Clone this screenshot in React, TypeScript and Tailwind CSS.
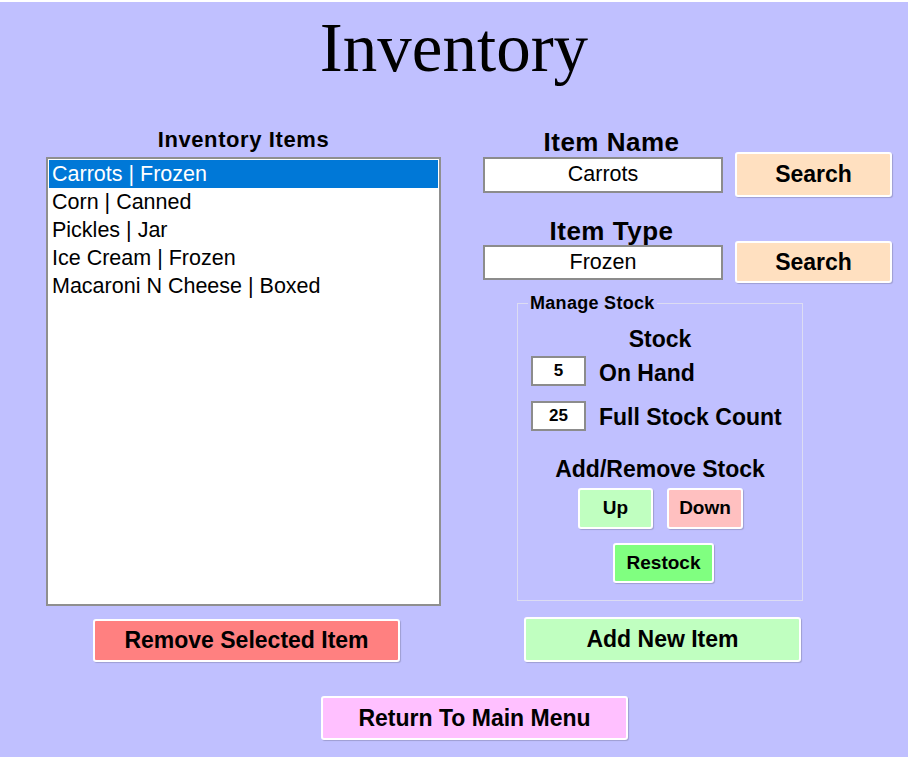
import React from 'react'

const items = [
  'Carrots | Frozen',
  'Corn | Canned',
  'Pickles | Jar',
  'Ice Cream | Frozen',
  'Macaroni N Cheese | Boxed',
]

const sans = "font-['Liberation_Sans',Arial,sans-serif]"
const btn =
  'flex items-center justify-center rounded-[3px] border-2 border-white font-bold text-black shadow-[1px_1px_1px_rgba(0,0,0,0.18)]'

function TextBox({ value, className }: { value: string; className: string }) {
  return (
    <div
      className={`flex items-center justify-center border-2 border-[#8c8c8c] bg-white text-black ${className}`}
    >
      {value}
    </div>
  )
}

export default function App() {
  return (
    <div
      className={`relative h-[757px] w-[908px] overflow-hidden border-t-2 border-white bg-[#c0c0ff] ${sans}`}
    >
      <div className="h-[125px] pt-[12px] text-center">
        <h1 className="font-['Liberation_Serif','Times_New_Roman',serif] text-[69px] leading-none text-black">
          Inventory
        </h1>
      </div>

      <div className="flex items-start">
        {/* left: list */}
        <div className="ml-[46px] flex w-[395px] flex-col">
          <div className="h-[26px] text-center text-[22px] font-bold leading-[26px] tracking-[0.6px] text-black">
            Inventory Items
          </div>
          <div className="mt-[4px] h-[449px] border-2 border-[#8f8f8f] bg-white px-[1px] pt-[1px]">
            {items.map((it, i) => (
              <div
                key={it}
                className={`h-[28px] pl-[3px] text-[21.5px] leading-[28px] ${
                  i === 0 ? 'bg-[#0078d7] text-white' : 'text-black'
                }`}
              >
                {it}
              </div>
            ))}
          </div>
          <button className={`${btn} ml-[47px] mt-[13px] h-[43px] w-[307px] bg-[#ff8080] text-[23px]`}>
            Remove Selected Item
          </button>
        </div>

        {/* right: search + stock */}
        <div className="ml-[42px] flex w-[409px] flex-col">
          <div className="mt-[4px] h-[22px] w-[240px] pl-[17px] text-center text-[26px] font-bold leading-[22px] tracking-[0.5px] text-black">
            Item Name
          </div>
          <div className="mt-[-1px] flex h-[45px] items-center">
            <TextBox value="Carrots" className="h-[36px] w-[240px] text-[21.5px]" />
            <button className={`${btn} ml-[12px] h-[45px] w-[157px] bg-[#ffe0c0] text-[23px]`}>
              Search
            </button>
          </div>

          <div className="mt-[23px] h-[22px] w-[240px] pl-[17px] text-center text-[26px] font-bold leading-[22px] tracking-[0.5px] text-black">
            Item Type
          </div>
          <div className="mt-[-1px] flex h-[42px] items-center">
            <TextBox value="Frozen" className="h-[35px] w-[240px] text-[21.5px]" />
            <button className={`${btn} ml-[12px] h-[42px] w-[157px] bg-[#ffe0c0] text-[23px]`}>
              Search
            </button>
          </div>

          {/* Manage Stock group */}
          <div className="relative ml-[34px] mt-[20px] flex h-[298px] w-[286px] flex-col border border-[#dcdcf2]">
            <span className="absolute left-[10px] top-[-10px] bg-[#c0c0ff] px-[2px] text-[18px] font-bold leading-[18px] tracking-[0.3px] text-black">
              Manage Stock
            </span>
            <div className="mt-[22px] h-[26px] text-center text-[23px] font-bold leading-[26px] text-black">
              Stock
            </div>
            <div className="mt-[4px] flex h-[30px] items-center">
              <TextBox value="5" className="ml-[13px] h-[30px] w-[55px] text-[17px] font-bold" />
              <span className="ml-[13px] mt-[4px] text-[23px] font-bold text-black">On Hand</span>
            </div>
            <div className="mt-[15px] flex h-[30px] items-center">
              <TextBox value="25" className="ml-[13px] h-[30px] w-[55px] text-[17px] font-bold" />
              <span className="ml-[13px] mt-[3px] text-[23px] font-bold text-black">Full Stock Count</span>
            </div>
            <div className="mt-[25px] h-[26px] text-center text-[23px] font-bold leading-[26px] text-black">
              Add/Remove Stock
            </div>
            <div className="mt-[6px] flex justify-center gap-[14px] pl-[1px]">
              <button className={`${btn} h-[41px] w-[75px] bg-[#c0ffc0] text-[19px]`}>Up</button>
              <button className={`${btn} h-[41px] w-[76px] bg-[#ffc0c0] text-[19px]`}>Down</button>
            </div>
            <div className="mt-[14px] flex justify-center pl-[7px]">
              <button className={`${btn} h-[40px] w-[101px] bg-[#80ff80] text-[19px]`}>Restock</button>
            </div>
          </div>

          <button className={`${btn} ml-[41px] mt-[16px] h-[45px] w-[277px] bg-[#c0ffc0] text-[23px]`}>
            Add New Item
          </button>
        </div>
      </div>

      <button className={`${btn} ml-[321px] mt-[34px] h-[44px] w-[307px] bg-[#ffc0ff] text-[23px]`}>
        Return To Main Menu
      </button>
    </div>
  )
}
